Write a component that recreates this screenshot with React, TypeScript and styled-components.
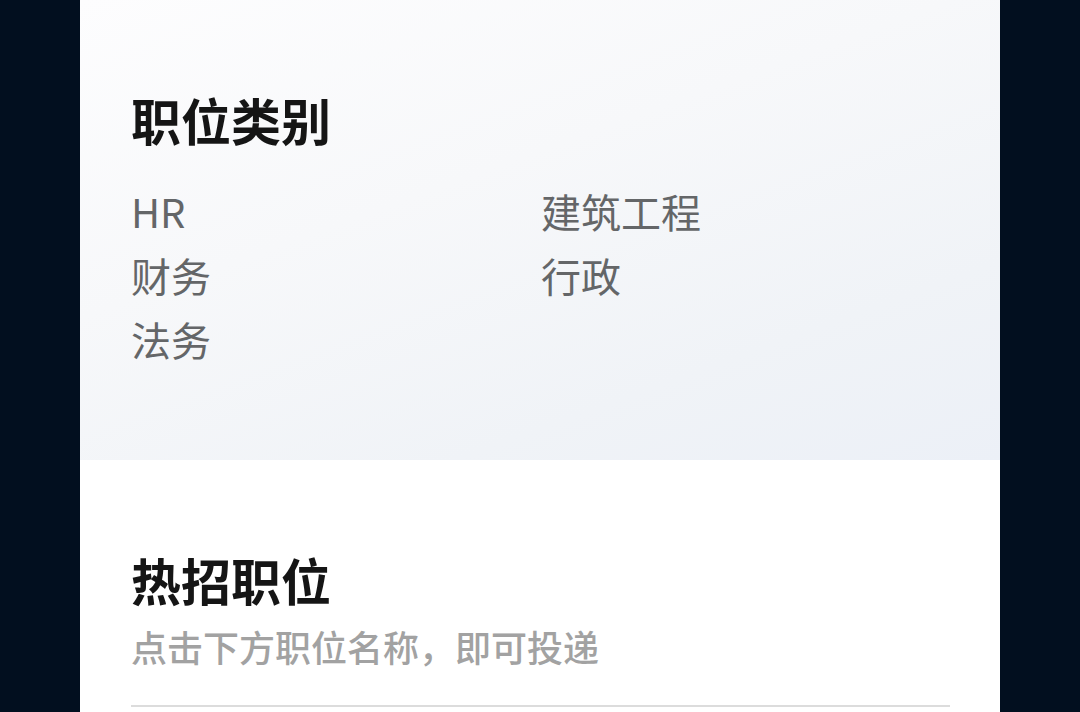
import React from "react";
import styled, { createGlobalStyle } from "styled-components";

const categories = ["HR", "建筑工程", "财务", "行政", "法务"];

export default function App() {
  return (
    <>
      <GlobalStyle />
      <Page>
        <Panel>
          <CategorySection>
            <SectionTitle>职位类别</SectionTitle>
            <CategoryGrid>
              {categories.map((name) => (
                <CategoryItem key={name}>{name}</CategoryItem>
              ))}
            </CategoryGrid>
          </CategorySection>
          <HotSection>
            <SectionTitle>热招职位</SectionTitle>
            <Hint>点击下方职位名称，即可投递</Hint>
            <Divider />
          </HotSection>
        </Panel>
      </Page>
    </>
  );
}

const GlobalStyle = createGlobalStyle`
  html, body {
    margin: 0;
    padding: 0;
    background: #020f1f;
  }
  body {
    font-family: "Noto Sans CJK SC", "Noto Sans", sans-serif;
    overflow: hidden;
  }
`;

const Page = styled.div`
  min-height: 712px;
  background: #020f1f;
  display: flex;
  justify-content: center;
`;

const Panel = styled.div`
  width: 920px;
  min-height: 712px;
  background: #ffffff;
  display: flex;
  flex-direction: column;
`;

const CategorySection = styled.section`
  height: 460px;
  box-sizing: border-box;
  padding: 86px 51px 0;
  background: linear-gradient(160deg, #fdfdfe 0%, #f7f8fa 40%, #f0f3f7 75%, #ecf0f7 100%);
`;

const SectionTitle = styled.h2`
  margin: 0;
  font-size: 50px;
  line-height: 67px;
  font-weight: 700;
  color: #151515;
`;

const CategoryGrid = styled.div`
  margin-top: 26px;
  display: grid;
  grid-template-columns: 410px 1fr;
`;

const CategoryItem = styled.div`
  font-size: 40px;
  line-height: 64px;
  color: #646668;
`;

const HotSection = styled.section`
  padding: 86px 50px 0 51px;
  background: #ffffff;
`;

const Hint = styled.p`
  margin: 8px 0 0;
  font-size: 36px;
  line-height: 50px;
  font-weight: 500;
  color: #a2a2a2;
`;

const Divider = styled.div`
  margin-top: 34px;
  height: 2px;
  background: #dcdcdc;
`;
